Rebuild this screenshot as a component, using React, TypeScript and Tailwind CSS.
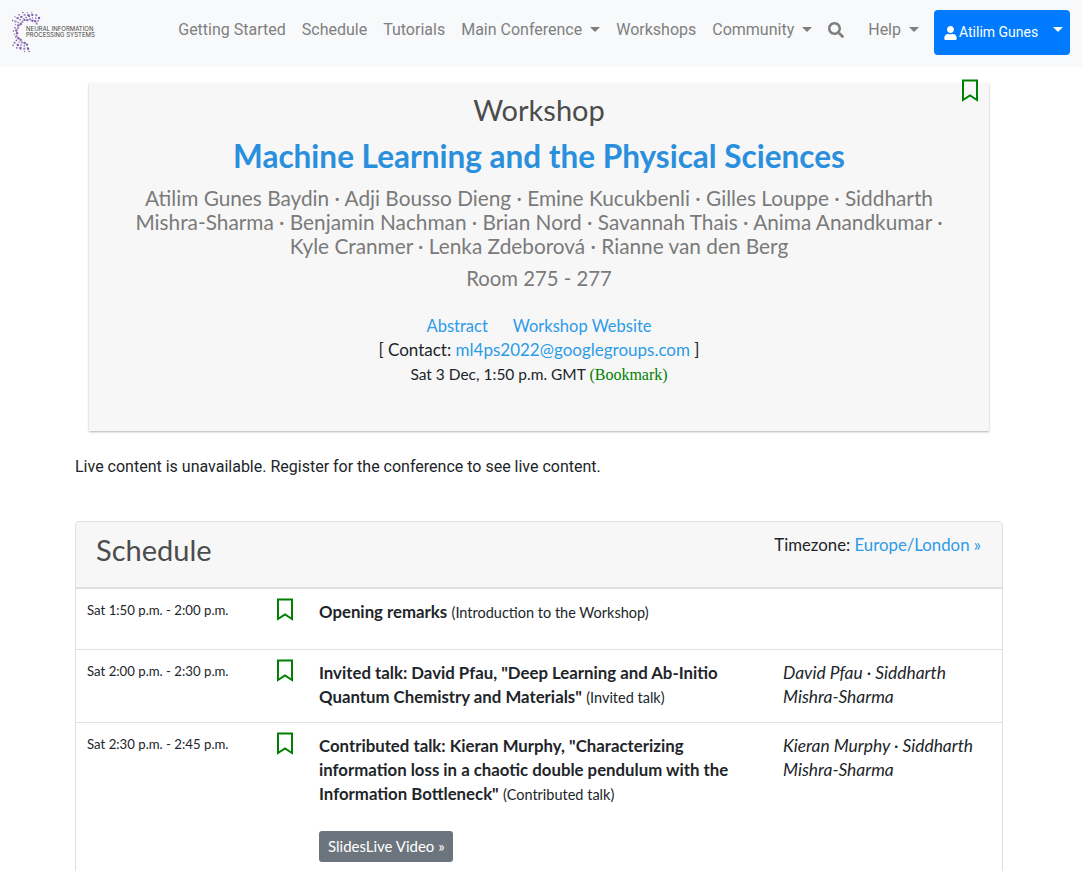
import React from 'react';

const body = { fontFamily: 'Lato, "Open Sans", sans-serif' };

const Caret = ({ className = 'border-t-[#7f7f7f]' }: { className?: string }) => (
  <span className={`inline-block ml-2 w-0 h-0 border-x-[5px] border-x-transparent border-t-[5px] ${className}`} />
);

const Bookmark = () => (
  <svg width="18" height="23" viewBox="0 0 18 23" className="block">
    <path d="M2 1.5H16V21L9 16.5L2 21Z" fill="none" stroke="#008000" strokeWidth="2" />
  </svg>
);

const Logo = () => {
  const dots: React.ReactElement[] = [];
  for (let i = 0; i < 72; i++) {
    const deg = 48 + (i / 71) * 222;
    const a = (deg * Math.PI) / 180;
    const band = i % 4;
    const r = 11.5 + band * 2.6 + (i % 7) * 0.25;
    // the band thins out along the left side of the arc
    if (band >= 2 && deg > 150 && deg < 215) continue;
    if (band === 3 && deg < 70) continue;
    dots.push(
      <circle key={i} cx={29 + r * Math.cos(a)} cy={32 - r * Math.sin(a)} r={i % 2 ? 0.8 : 1.2} fill={i % 3 ? '#7d5aa8' : '#a995c6'} />
    );
  }
  return (
    <div className="relative w-[100px] h-[40px] shrink-0">
      <svg width="44" height="40" viewBox="8 12 44 40" className="absolute left-0 top-0">{dots}</svg>
      <div className="absolute left-[18px] top-[14px] text-[6px] leading-[6px] text-[#444] whitespace-nowrap" style={{ fontFamily: 'Inter, sans-serif' }}>
        NEURAL INFORMATION<br />PROCESSING SYSTEMS
      </div>
    </div>
  );
};

const NavItem = ({ label, caret }: { label: string; caret?: boolean }) => (
  <a className="px-2 flex items-center text-[16px] text-[#7f7f7f] whitespace-nowrap">
    {label}
    {caret && <Caret />}
  </a>
);

const Row = ({ time, title, kind, speakers, video, tall }: { time: string; title: React.ReactNode; kind: string; speakers?: React.ReactNode; video?: boolean; tall?: boolean }) => (
  <div className={`flex border-t border-[#dfdfdf] pl-[11px] ${tall ? 'min-h-[61px]' : ''}`}>
    <div className="w-[189px] shrink-0 pt-[11px] text-[13.2px] leading-[20px] text-[#212529]">{time}</div>
    <div className="w-[43px] shrink-0 pt-[9px]"><Bookmark /></div>
    <div className="w-[464px] shrink-0 pt-[11px] pb-[12px] pr-[24px] text-[16.8px] leading-[24px] text-[#212529]">
      <b className="font-bold">{title}</b> <span className="text-[14.5px]">({kind})</span>
      {video && (
        <div className="mt-[24px] mb-[10px]">
          <span className="inline-block bg-[#6c757d] text-white text-[15px] leading-[23px] pl-[9px] pr-[8px] py-1 rounded-[3px]">SlidesLive Video »</span>
        </div>
      )}
    </div>
    <div className="pt-[11px] text-[17.4px] leading-[24px] italic text-[#212529] w-[200px]">{speakers}</div>
  </div>
);

export default function App() {
  return (
    <div className="h-[871px] overflow-hidden bg-white text-[#212529]" style={{ fontFamily: 'Roboto, sans-serif' }}>
      <nav className="h-[67px] bg-[#f8f9fa] flex items-start pl-2 pr-3">
        <div className="pt-[12px]"><Logo /></div>
        <div className="ml-auto flex items-start pt-[10px]">
          <div className="flex h-[38px] pt-[1px]">
            <NavItem label="Getting Started" />
            <NavItem label="Schedule" />
            <NavItem label="Tutorials" />
            <NavItem label="Main Conference" caret />
            <NavItem label="Workshops" />
            <NavItem label="Community" caret />
            <a className="px-2 flex items-center">
              <svg width="16" height="16" viewBox="0 0 512 512" fill="#7f7f7f"><path d="M505 442.700L405.300 343c-4.500-4.500-10.600-7-17-7H372c27.600-35.300 44-79.700 44-128C416 93.100 322.900 0 208 0S0 93.100 0 208s93.100 208 208 208c48.300 0 92.700-16.400 128-44v16.300c0 6.400 2.500 12.500 7 17l99.700 99.700c9.400 9.400 24.600 9.400 33.900 0l28.300-28.300c9.400-9.400 9.400-24.600.1-34zM208 336c-70.700 0-128-57.200-128-128 0-70.700 57.200-128 128-128 70.700 0 128 57.200 128 128 0 70.700-57.200 128-128 128z" /></svg>
            </a>
            <div className="w-[8px]" />
            <NavItem label="Help" caret />
          </div>
          <button className="ml-[7px] w-[136px] h-[45px] bg-[#007bff] rounded-[4px] text-white text-[14px] flex items-center pl-[10px]">
            <svg width="13" height="14" viewBox="0 0 448 512" fill="#fff" className="mr-[2px]"><path d="M224 256c70.700 0 128-57.300 128-128S294.700 0 224 0 96 57.300 96 128s57.300 128 128 128zm89.600 32h-16.700c-22.200 10.200-46.900 16-72.900 16s-50.600-5.800-72.900-16h-16.700C60.200 288 0 348.200 0 422.400V464c0 26.500 21.500 48 48 48h352c26.500 0 48-21.500 48-48v-41.600c0-74.200-60.200-134.400-134.400-134.400z" /></svg>
            Atilim Gunes
            <span className="ml-[15px] -mt-[6px] w-0 h-0 border-x-[5px] border-x-transparent border-t-[5px] border-t-white" />
          </button>
        </div>
      </nav>

      <main style={body}>
        <section className="relative mt-[16px] ml-[89px] w-[900px] h-[348px] bg-[#f7f7f7] shadow-[0_1px_2px_rgba(0,0,0,0.3)] text-center pt-[7px]">
          <div className="absolute right-[10px] -top-[4px]"><Bookmark /></div>
          <div className="text-[29px] leading-[40px] text-[#4c4c4c]">Workshop</div>
          <h1 className="mt-[6px] text-[31.5px] leading-[40px] font-bold text-[#2a8fdc]">Machine Learning and the Physical Sciences</h1>
          <div className="mt-[10px] mx-auto w-[840px] text-[20.8px] leading-[24px] text-[#7a7a7a]">
            Atilim Gunes Baydin · Adji Bousso Dieng · Emine Kucukbenli · Gilles Louppe · Siddharth Mishra-Sharma · Benjamin Nachman · Brian Nord · Savannah Thais · Anima Anandkumar · Kyle Cranmer · Lenka Zdeborová · Rianne van den Berg
          </div>
          <div className="mt-[8px] text-[20.3px] leading-[24px] text-[#7a7a7a]">Room 275 - 277</div>
          <div className="mt-[24px] text-[16.5px] leading-[24px] text-[#2d9be8]">
            <a>Abstract</a><a className="ml-[25px]">Workshop Website</a>
          </div>
          <div className="text-[17px] leading-[24px]">[ Contact: <a className="text-[#2d9be8]">ml4ps2022@googlegroups.com</a> ]</div>
          <div className="text-[15.5px] leading-[24px]">
            Sat 3 Dec, 1:50 p.m. GMT <span className="text-[16px] text-[#008000]" style={{ fontFamily: '"Liberation Serif", serif' }}>(Bookmark)</span>
          </div>
        </section>

        <p className="ml-[75px] mt-[24px] text-[16px] leading-[24px] text-[#212529]" style={{ fontFamily: 'Roboto, sans-serif' }}>
          Live content is unavailable. Register for the conference to see live content.
        </p>

        <section className="ml-[75px] mt-[42px] w-[928px] border border-[#dfdfdf] rounded-[4px] overflow-hidden">
          <header className="h-[66px] bg-[#f7f7f7] border-b border-[#dfdfdf] flex justify-between pl-[20px] pr-[21px]">
            <h2 className="text-[29px] leading-[55px] text-[#4c4c4c]">Schedule</h2>
            <div className="pt-[11px] text-[16.8px] leading-[24px]">Timezone: <a className="text-[#2d9be8]">Europe/London »</a></div>
          </header>
          <Row tall time="Sat 1:50 p.m. - 2:00 p.m." title="Opening remarks" kind="Introduction to the Workshop" />
          <Row time="Sat 2:00 p.m. - 2:30 p.m." title={'Invited talk: David Pfau, "Deep Learning and Ab-Initio Quantum Chemistry and Materials"'} kind="Invited talk" speakers="David Pfau · Siddharth Mishra-Sharma" />
          <Row video time="Sat 2:30 p.m. - 2:45 p.m." title={'Contributed talk: Kieran Murphy, "Characterizing information loss in a chaotic double pendulum with the Information Bottleneck"'} kind="Contributed talk" speakers="Kieran Murphy · Siddharth Mishra-Sharma" />
        </section>
      </main>
    </div>
  );
}
